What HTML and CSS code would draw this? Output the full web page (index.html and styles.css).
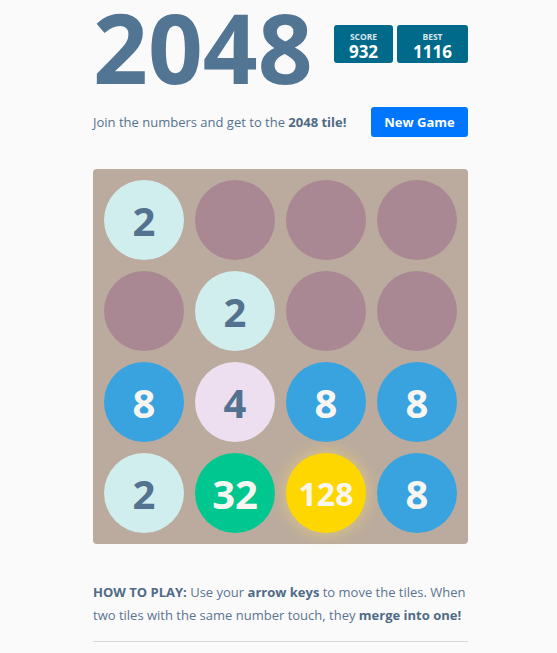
FILE: index.html
```html
<!DOCTYPE html>
<html>
<head>
<meta charset="utf-8">
<link rel="stylesheet" href="styles.css">
</head>
<body>
<div class="container">
  <div class="heading">
    <h1 class="title">2048</h1>
    <div class="scores">
      <div class="score-box score"><div class="label">SCORE</div><div class="value">932</div></div>
      <div class="score-box best"><div class="label">BEST</div><div class="value">1116</div></div>
    </div>
  </div>
  <div class="intro-row">
    <p class="intro">Join the numbers and get to the <strong>2048 tile!</strong></p>
    <button class="new-game">New Game</button>
  </div>
  <div class="board">
    <div class="cell t2">2</div>
    <div class="cell"></div>
    <div class="cell"></div>
    <div class="cell"></div>
    <div class="cell"></div>
    <div class="cell t2">2</div>
    <div class="cell"></div>
    <div class="cell"></div>
    <div class="cell t8">8</div>
    <div class="cell t4">4</div>
    <div class="cell t8">8</div>
    <div class="cell t8">8</div>
    <div class="cell t2">2</div>
    <div class="cell t32">32</div>
    <div class="cell t128">128</div>
    <div class="cell t8">8</div>
  </div>
  <p class="explain"><strong>HOW TO PLAY:</strong> Use your <strong>arrow keys</strong> to move the tiles. When two tiles with the same number touch, they <strong>merge into one!</strong></p>
  <hr class="rule">
</div>
</body>
</html>
```
FILE: styles.css
```css
html, body {
  margin: 0;
  background: #fafafa;
}
body {
  padding: 0 0 0 4px;
  font-family: "Open Sans", "DejaVu Sans", sans-serif;
  color: #54728f;
}
.container {
  width: 375px;
  margin: 0 auto;
}
.heading {
  display: flex;
  justify-content: space-between;
  align-items: flex-start;
}
.title {
  margin: 0;
  font-size: 96px;
  line-height: 94px;
  font-weight: 700;
  color: #537594;
}
.scores {
  display: flex;
  gap: 4px;
  margin-top: 25px;
}
.score-box {
  background: #006a8a;
  border-radius: 3px;
  height: 38px;
  display: flex;
  flex-direction: column;
  align-items: center;
  color: #fff;
}
.score { width: 59px; }
.best { width: 71px; }
.label {
  font-size: 8.5px;
  font-weight: 700;
  color: #dbe6ea;
  margin-top: 6px;
  line-height: 11px;
}
.value {
  font-size: 17px;
  font-weight: 700;
  line-height: 18px;
  margin-top: 1px;
}
.intro-row {
  display: flex;
  justify-content: space-between;
  align-items: center;
  margin-top: 13px;
}
.intro {
  margin: 0;
  font-size: 13px;
  color: #54728f;
}
.intro strong { color: #4f6b85; }
.new-game {
  width: 97px;
  height: 30px;
  border: 0;
  border-radius: 3px;
  background: #0076ff;
  color: #fff;
  font-family: inherit;
  font-size: 13px;
  font-weight: 700;
  padding: 0;
}
.board {
  margin-top: 32px;
  width: 375px;
  height: 375px;
  box-sizing: border-box;
  padding: 11px;
  background: #baab9e;
  border-radius: 4px;
  display: grid;
  grid-template-columns: repeat(4, 80px);
  grid-template-rows: repeat(4, 80px);
  gap: 11px;
}
.cell {
  border-radius: 50%;
  background: #a98893;
  display: flex;
  align-items: center;
  justify-content: center;
  font-size: 40px;
  font-weight: 700;
  color: #f9f6f2;
}
.t2 { background: #d1eeee; color: #53728f; }
.t4 { background: #eedff0; color: #53728f; }
.t8 { background: #38a3df; }
.t32 { background: #00c78f; }
.t128 {
  background: #ffd700;
  font-size: 32px;
  box-shadow: 0 0 14px 4px rgba(243, 215, 116, 0.45);
}
.explain {
  margin: 37px 0 0;
  font-size: 13px;
  line-height: 23px;
  color: #5a7591;
}
.explain strong { color: #4f6b85; }
.rule {
  margin: 14px 0 0;
  border: 0;
  border-top: 1px solid #d8d8d8;
}
```
